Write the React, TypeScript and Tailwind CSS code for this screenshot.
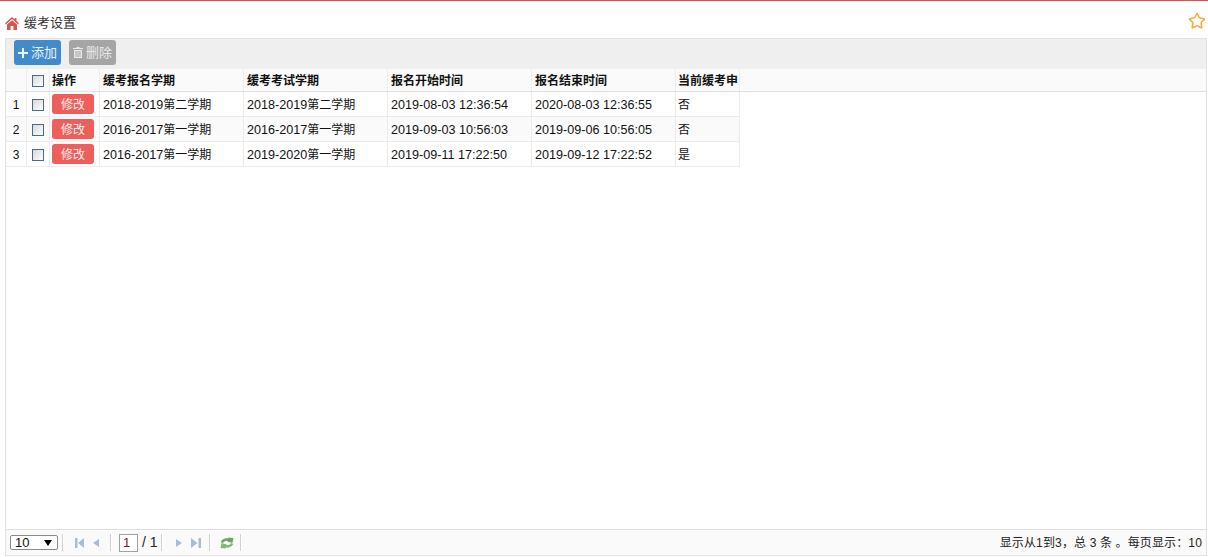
import React from 'react';
import { Star } from 'lucide-react';

const rows = [
  { no: 1, apply: '2018-2019', applyTerm: '第二学期', exam: '2018-2019', examTerm: '第二学期', start: '2019-08-03 12:36:54', end: '2020-08-03 12:36:55', current: '否' },
  { no: 2, apply: '2016-2017', applyTerm: '第一学期', exam: '2016-2017', examTerm: '第一学期', start: '2019-09-03 10:56:03', end: '2019-09-06 10:56:05', current: '否' },
  { no: 3, apply: '2016-2017', applyTerm: '第一学期', exam: '2019-2020', examTerm: '第一学期', start: '2019-09-11 17:22:50', end: '2019-09-12 17:22:52', current: '是' },
];

function Check() {
  return <span className="block w-[12px] h-[12px] border border-[#4a6a8a] bg-gradient-to-br from-[#d8d8d8] to-white" />;
}

function Sep() {
  return <span className="block w-px h-[17px] bg-[#d0d0d0] border-r border-white box-content" />;
}

function HomeIcon() {
  return (
    <svg width="14" height="13" viewBox="0 0 14 13" className="text-[#d9534f]" fill="currentColor">
      <path d="M7 0 0 6.2l.9 1L7 1.9l6.1 5.3.9-1L11.5 4V1H9.7v1.4z" />
      <path d="M7 3.2 2 7.6V13h3.6V9h2.8v4H12V7.6z" />
    </svg>
  );
}

function PlusIcon() {
  return (
    <svg width="10" height="10" viewBox="0 0 10 10" fill="currentColor">
      <path d="M4 0h2v4h4v2H6v4H4V6H0V4h4z" />
    </svg>
  );
}

function TrashIcon() {
  return (
    <svg width="10" height="11" viewBox="0 0 10 11" fill="currentColor">
      <path d="M3.5 0h3v1H10v1H0V1h3.5z" />
      <path d="M1 3h8v8H1zM2.5 4v6h1V4zm2 0v6h1V4zm2 0v6h1V4z" fillRule="evenodd" />
    </svg>
  );
}

function PagerIcon({ kind }: { kind: 'first' | 'prev' | 'next' | 'last' }) {
  if (kind === 'first') {
    return (
      <svg width="9" height="10" viewBox="0 0 9 10" className="block text-[#a9bcd6]" fill="currentColor">
        <path d="M0 0h2.5v10H0zM9 0v10L3 5z" />
      </svg>
    );
  }
  if (kind === 'last') {
    return (
      <svg width="10" height="10" viewBox="0 0 10 10" className="block text-[#a9bcd6]" fill="currentColor">
        <path d="M7.5 0H10v10H7.5zM0 0v10l6.5-5z" />
      </svg>
    );
  }
  return (
    <svg width="6" height="10" viewBox="0 0 6 10" className="block text-[#a9bcd6]" fill="currentColor">
      {kind === 'prev' ? <path d="M6 1v8L0 5z" /> : <path d="M0 1v8l6-4z" />}
    </svg>
  );
}

function Refresh() {
  return (
    <svg width="14" height="12" viewBox="0 0 14 12" className="block" fill="none">
      <path d="M1.8 5.4C3 2.6 6.8 1.8 9.8 3.6" stroke="#6ca662" strokeWidth="2.5" />
      <path d="M8.2 .6 13.4 1l-.9 5-4.6-1.2z" fill="#6ca662" />
      <path d="M12.2 6.6C11 9.4 7.2 10.2 4.2 8.4" stroke="#82b878" strokeWidth="2.5" />
      <path d="M5.8 11.4.6 11l.9-5 4.6 1.2z" fill="#82b878" />
    </svg>
  );
}

function HeadCell({ className, children }: { className: string; children?: React.ReactNode }) {
  return <div className={`flex items-center border-r border-[#ececec] pt-[2px] ${className}`}>{children}</div>;
}

function BodyCell({ className, children }: { className: string; children?: React.ReactNode }) {
  return <div className={`flex items-center border-r border-[#ececec] whitespace-nowrap ${className}`}>{children}</div>;
}

function Num({ children }: { children: React.ReactNode }) {
  return <span className="text-[12.6px]">{children}</span>;
}

export default function App() {
  return (
    <div className="h-[557px] flex flex-col bg-white text-[12px] text-[#111] overflow-hidden font-['Liberation_Sans','Noto_Sans_CJK_SC',sans-serif]">
      <div className="h-px bg-[#d9534f]" />

      {/* Title */}
      <div className="h-[37px] flex items-center pl-[5px] pr-[2px] pt-[7px]">
        <HomeIcon />
        <span className="ml-[5px] text-[13px] text-[#333]">缓考设置</span>
        <Star size={18} strokeWidth={2} className="ml-auto mb-[5px] text-[#f5ab35]" />
      </div>

      {/* Panel */}
      <div className="flex-1 ml-[5px] mr-px mb-px flex flex-col border border-[#e2e2e2] min-h-0">
        <div className="h-[30px] flex items-start gap-2 pt-px px-2 bg-[#efefef] shrink-0">
          <button className="h-[25px] w-[47px] rounded-[3px] bg-[#428bca] text-[#e8f2fa] text-[13px] flex items-center justify-center gap-[3px]">
            <PlusIcon />添加
          </button>
          <button className="h-[25px] w-[47px] rounded-[3px] bg-[#a5a5a5] text-[#e9e9e9] text-[13px] flex items-center justify-center gap-[3px]">
            <TrashIcon />删除
          </button>
        </div>

        {/* Table header */}
        <div className="h-[22px] flex bg-[#fafafa] border-b border-[#dedede] font-bold shrink-0 box-content">
          <HeadCell className="w-[21px]" />
          <HeadCell className="w-[23px] pl-[5px]"><Check /></HeadCell>
          <HeadCell className="w-[50px] pl-[2px]">操作</HeadCell>
          <HeadCell className="w-[144px] pl-[3px]">缓考报名学期</HeadCell>
          <HeadCell className="w-[144px] pl-[3px]">缓考考试学期</HeadCell>
          <HeadCell className="w-[144px] pl-[3px]">报名开始时间</HeadCell>
          <HeadCell className="w-[144px] pl-[3px]">报名结束时间</HeadCell>
          <HeadCell className="w-[64px] pl-[2px] whitespace-nowrap">当前缓考申</HeadCell>
        </div>

        {/* Rows */}
        <div className="flex-1 min-h-0">
          {rows.map((r) => (
            <div key={r.no} className={`h-[25px] w-[734px] flex border-b border-[#ececec] ${r.no === 2 ? 'bg-[#fafafa]' : ''}`}>
              <BodyCell className="w-[21px] justify-center pt-[2px]">{r.no}</BodyCell>
              <BodyCell className="w-[23px] pl-[5px] pt-px"><Check /></BodyCell>
              <BodyCell className="w-[50px] pl-[2px]">
                <button className="h-[20px] w-[42px] rounded-[3px] bg-[#ee5f5b] text-[#fdeeee] pt-px">修改</button>
              </BodyCell>
              <BodyCell className="w-[144px] pl-[3px] pt-[2px]"><Num>{r.apply}</Num>{r.applyTerm}</BodyCell>
              <BodyCell className="w-[144px] pl-[3px] pt-[2px]"><Num>{r.exam}</Num>{r.examTerm}</BodyCell>
              <BodyCell className="w-[144px] pl-[3px] pt-[2px]"><Num>{r.start}</Num></BodyCell>
              <BodyCell className="w-[144px] pl-[3px] pt-[2px]"><Num>{r.end}</Num></BodyCell>
              <BodyCell className="w-[64px] pl-[2px] pt-[2px]">{r.current}</BodyCell>
            </div>
          ))}
        </div>

        {/* Pager */}
        <div className="h-[25px] flex items-center bg-[#fafafa] border-t border-[#dedede] pl-1 pr-[4px] shrink-0 box-content">
          <div className="w-[48px] h-[15px] border border-[#8a8a8a] rounded-[2px] bg-white flex items-center justify-between pl-1 pr-[5px] text-[13px]">
            10
            <span className="w-0 h-0 border-x-[4px] border-x-transparent border-t-[6px] border-t-black" />
          </div>
          <span className="ml-[4px]"><Sep /></span>
          <span className="ml-[11px]"><PagerIcon kind="first" /></span>
          <span className="ml-[9px]"><PagerIcon kind="prev" /></span>
          <span className="ml-[11px]"><Sep /></span>
          <span className="ml-[7px] w-[19px] h-[18px] border border-[#a0a0a0] bg-white flex items-center pl-[3px] text-[13px] text-[#7a1030]">1</span>
          <span className="ml-[4px] text-[14px] text-[#222]">/ 1</span>
          <span className="ml-[3px]"><Sep /></span>
          <span className="ml-[13px]"><PagerIcon kind="next" /></span>
          <span className="ml-[9px]"><PagerIcon kind="last" /></span>
          <span className="ml-[8px]"><Sep /></span>
          <span className="ml-[9px]"><Refresh /></span>
          <span className="ml-[6px]"><Sep /></span>
          <span className="ml-auto text-[12px] tracking-[0.14px] text-[#222]">显示从1到3，总 3 条 。每页显示：10</span>
        </div>
      </div>
    </div>
  );
}
